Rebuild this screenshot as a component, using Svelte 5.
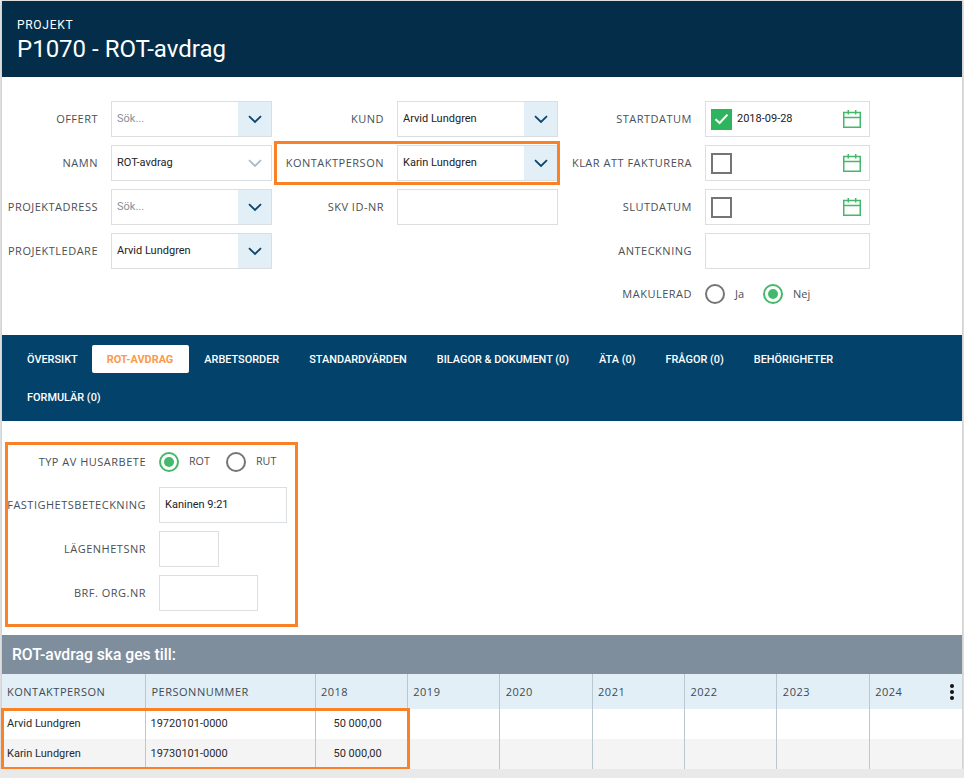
<script>
  const flikar = ['ÖVERSIKT', 'ROT-AVDRAG', 'ARBETSORDER', 'STANDARDVÄRDEN', 'BILAGOR & DOKUMENT (0)', 'ÄTA (0)', 'FRÅGOR (0)', 'BEHÖRIGHETER', 'FORMULÄR (0)'];
  const aktiv = 'ROT-AVDRAG';
  const ar = ['2018', '2019', '2020', '2021', '2022', '2023', '2024'];
  const rader = [
    { namn: 'Arvid Lundgren', pnr: '19720101-0000', belopp: '50 000,00' },
    { namn: 'Karin Lundgren', pnr: '19730101-0000', belopp: '50 000,00' }
  ];
</script>

{#snippet chevron(dim)}
  <span class="pil" class:dim>
    <svg width="14" height="9" viewBox="0 0 14 9"><path d="M1 1.2 7 7l6-5.8" fill="none" stroke="currentColor" stroke-width="1.8"/></svg>
  </span>
{/snippet}

{#snippet valj(text, platshallare, dim)}
  <div class="falt valj">
    <span class="varde" class:sok={platshallare}>{text}</span>
    {@render chevron(dim)}
  </div>
{/snippet}

{#snippet datum(text)}
  <div class="falt datum">
    {#if text}
      <span class="ruta vald">
        <svg width="15" height="12" viewBox="0 0 15 12"><path d="M1.5 6.2 5.6 10 13.5 1.6" fill="none" stroke="#fff" stroke-width="2"/></svg>
      </span>
      <span class="varde">{text}</span>
    {:else}
      <span class="ruta"></span>
    {/if}
    <svg class="kal" width="18" height="18" viewBox="0 0 18 18">
      <path d="M.75 2.5h16.5v14.75H.75zM.75 7.5h16.5M5.3 0v4.5M12.7 0v4.5" fill="none" stroke="#45b96b" stroke-width="1.5"/>
    </svg>
  </div>
{/snippet}

{#snippet radio(text, vald)}
  <span class="radio" class:vald><i></i></span><span class="radiotext">{text}</span>
{/snippet}

<div class="kort">
  <header>
    <div class="over">PROJEKT</div>
    <h1>P1070 - ROT-avdrag</h1>
  </header>

  <section class="formular">
    <div class="kolumn k1">
      <div class="rad"><label>OFFERT</label>{@render valj('Sök...', true)}</div>
      <div class="rad"><label>NAMN</label>{@render valj('ROT-avdrag', false, true)}</div>
      <div class="rad"><label>PROJEKTADRESS</label>{@render valj('Sök...', true)}</div>
      <div class="rad"><label>PROJEKTLEDARE</label>{@render valj('Arvid Lundgren')}</div>
    </div>
    <div class="kolumn k2">
      <div class="rad"><label>KUND</label>{@render valj('Arvid Lundgren')}</div>
      <div class="rad markerad"><label>KONTAKTPERSON</label>{@render valj('Karin Lundgren')}</div>
      <div class="rad"><label>SKV ID-NR</label><div class="falt"></div></div>
    </div>
    <div class="kolumn k3">
      <div class="rad"><label>STARTDATUM</label>{@render datum('2018-09-28')}</div>
      <div class="rad"><label>KLAR ATT FAKTURERA</label>{@render datum('')}</div>
      <div class="rad"><label>SLUTDATUM</label>{@render datum('')}</div>
      <div class="rad"><label>ANTECKNING</label><div class="falt"></div></div>
      <div class="rad radiorad">
        <label>MAKULERAD</label>
        {@render radio('Ja', false)}
        {@render radio('Nej', true)}
      </div>
    </div>
  </section>

  <nav>
    {#each flikar as flik}
      <span class="flik" class:aktiv={flik === aktiv}>{flik}</span>
    {/each}
  </nav>

  <section class="husarbete">
    <div class="ram">
      <div class="rad radiorad"><label>TYP AV HUSARBETE</label>
        {@render radio('ROT', true)}
        {@render radio('RUT', false)}
      </div>
      <div class="rad"><label>FASTIGHETSBETECKNING</label><div class="falt fast"><span class="varde">Kaninen 9:21</span></div></div>
      <div class="rad"><label>LÄGENHETSNR</label><div class="falt lgh"></div></div>
      <div class="rad"><label>BRF. ORG.NR</label><div class="falt brf"></div></div>
    </div>
  </section>

  <h2>ROT-avdrag ska ges till:</h2>

  <div class="tabell">
    <table>
      <colgroup>
        <col class="c-namn" /><col class="c-pnr" />
        {#each ar as _}<col class="c-ar" />{/each}
        <col />
      </colgroup>
      <thead>
        <tr>
          <th>KONTAKTPERSON</th>
          <th class="pnr">PERSONNUMMER</th>
          {#each ar as a, i}
            <th class="ar" class:sist={i === ar.length - 1}>
              {a}
              {#if i === ar.length - 1}<span class="meny"><i></i><i></i><i></i></span>{/if}
            </th>
          {/each}
        </tr>
      </thead>
      <tbody>
        {#each rader as r}
          <tr>
            <td>{r.namn}</td>
            <td>{r.pnr}</td>
            <td class="belopp">{r.belopp}</td>
            {#each ar.slice(1) as _}<td></td>{/each}
          </tr>
        {/each}
      </tbody>
    </table>
    <div class="tabellram"></div>
  </div>
</div>

<style>
  :global(body) {
    margin: 0;
    background: #e9e9e9;
    font-family: Roboto, sans-serif;
  }

  .kort {
    margin: 1px 2px 0;
    width: 960px;
    background: #fff;
    box-shadow: 0 1px 3px rgba(0, 0, 0, 0.25);
  }

  header {
    background: #032d49;
    color: #fff;
    height: 76px;
    box-sizing: border-box;
    padding: 16px 15px 0;
  }

  .over {
    font-size: 12px;
    line-height: 16px;
    letter-spacing: 0.7px;
  }

  h1 {
    margin: 1px 0 0;
    font-size: 24px;
    line-height: 30px;
    font-weight: 400;
  }

  .formular {
    height: 258px;
    box-sizing: border-box;
    padding-top: 24px;
    display: flex;
  }

  .kolumn { display: flex; flex-direction: column; gap: 8px; }
  .k1 { width: 270px; --etikett: 96px; }
  .k2 { width: 286px; --etikett: 112px; }
  .k3 { --etikett: 134px; }

  .rad {
    display: flex;
    align-items: center;
    height: 36px;
    position: relative;
  }

  label {
    flex: none;
    width: var(--etikett);
    margin-right: 13px;
    margin-top: -2px;
    white-space: nowrap;
    display: flex;
    justify-content: flex-end;
    font-family: "Open Sans", sans-serif;
    font-size: 11px;
    letter-spacing: 0.5px;
    color: #4a4f55;
  }

  .falt {
    flex: none;
    box-sizing: border-box;
    width: 161px;
    height: 36px;
    border: 1px solid #dcdfe1;
    background: #fff;
    display: flex;
    align-items: center;
    position: relative;
  }

  .varde {
    padding-left: 5px;
    font-size: 11px;
    color: #222;
    margin-top: -2px;
  }

  .sok { color: #8a8f94; }

  .pil {
    margin-left: auto;
    width: 33px;
    align-self: stretch;
    background: #e2eff7;
    color: #0c466d;
    display: flex;
    align-items: center;
    justify-content: center;
  }

  .pil.dim {
    background: #fff;
    color: #a9bccb;
  }

  .markerad::after {
    content: "";
    position: absolute;
    left: 2px;
    top: -4px;
    width: 286px;
    height: 44px;
    box-sizing: border-box;
    border: 3px solid #f98228;
    pointer-events: none;
  }

  .k3 .falt { width: 165px; }

  .datum { padding-left: 5px; }
  .datum .varde { padding-left: 5px; }

  .ruta {
    flex: none;
    box-sizing: border-box;
    width: 21px;
    height: 21px;
    border: 2px solid #757575;
    display: flex;
    align-items: center;
    justify-content: center;
  }

  .ruta.vald {
    background: #2db55d;
    border: 0;
  }

  .kal {
    margin-left: auto;
    margin-right: 8px;
    margin-top: -1px;
  }

  .radio {
    flex: none;
    box-sizing: border-box;
    width: 20px;
    height: 20px;
    border-radius: 50%;
    border: 2px solid #757575;
    display: flex;
    align-items: center;
    justify-content: center;
  }

  .radio.vald { border-color: #45b96b; }

  .radio.vald i {
    width: 10px;
    height: 10px;
    border-radius: 50%;
    background: #45b96b;
  }

  .radiotext {
    flex: none;
    width: 28px;
    margin-left: 10px;
    margin-top: -2px;
    font-family: "Open Sans", sans-serif;
    font-size: 11px;
    color: #4a4f55;
  }

  .k3 .radiorad { margin-top: -1px; }
  .ram .radiotext { width: 37px; font-size: 10.7px; }

  nav {
    background: #03426a;
    padding: 10px 40px 10px 10px;
    display: flex;
    flex-wrap: wrap;
    row-gap: 10px;
    height: 86px;
    box-sizing: border-box;
    align-content: flex-start;
  }

  .flik {
    height: 28px;
    line-height: 29px;
    padding: 0 15px;
    color: #fff;
    font-size: 10.92px;
    font-weight: 500;
    border-radius: 2px;
    white-space: nowrap;
  }

  .flik.aktiv {
    margin-left: -1px;
    padding-right: 16px;
    background: #fff;
    color: #fb9a4b;
    font-weight: 700;
  }

  .husarbete {
    height: 214px;
    box-sizing: border-box;
    padding: 21px 0 0 3px;
  }

  .ram {
    box-sizing: border-box;
    width: 293px;
    height: 185px;
    border: 3px solid #f98228;
    display: flex;
    flex-direction: column;
    gap: 8px;
    --etikett: 138px;
  }

  .ram .radiorad { height: 34px; }
  .fast { width: 128px; }
  .lgh { width: 60px; }
  .brf { width: 99px; }

  h2 {
    margin: 0;
    height: 39px;
    line-height: 39px;
    padding-left: 10px;
    background: #7f8e9d;
    color: #fff;
    font-size: 15.7px;
    font-weight: 500;
  }

  .tabell { position: relative; }

  table {
    width: 100%;
    table-layout: fixed;
    border-collapse: collapse;
  }

  .c-namn { width: 143px; }
  .c-pnr { width: 170px; }
  .c-ar { width: 92.4px; }

  th {
    height: 35px;
    padding: 0 5px;
    background: #e2eff7;
    border-right: 1px solid #b9c7d1;
    text-align: left;
    font-family: "Open Sans", sans-serif;
    font-size: 11px;
    font-weight: 400;
    letter-spacing: 0.5px;
    color: #3f4a52;
    position: relative;
  }

  th.pnr { padding-left: 6px; }
  th.ar { padding-left: 5.4px; }
  th.sist { border-right: 0; }

  td {
    height: 30px;
    padding: 0 5px 2px;
    box-sizing: border-box;
    border-right: 1px solid #b9c7d1;
    font-size: 11px;
    color: #2a2a2a;
  }

  td:last-child { border-right: 0; }
  tbody tr:nth-child(even) td { background: #f4f4f4; }
  td.belopp { padding-left: 18px; }

  .meny {
    position: absolute;
    right: 8px;
    top: 10px;
    display: flex;
    flex-direction: column;
    gap: 2px;
  }

  .meny i {
    width: 4px;
    height: 4px;
    border-radius: 50%;
    background: #111;
  }

  .tabellram {
    position: absolute;
    left: -1px;
    top: 34px;
    width: 409px;
    height: 62px;
    box-sizing: border-box;
    border: 3px solid #f98228;
    pointer-events: none;
  }
</style>
